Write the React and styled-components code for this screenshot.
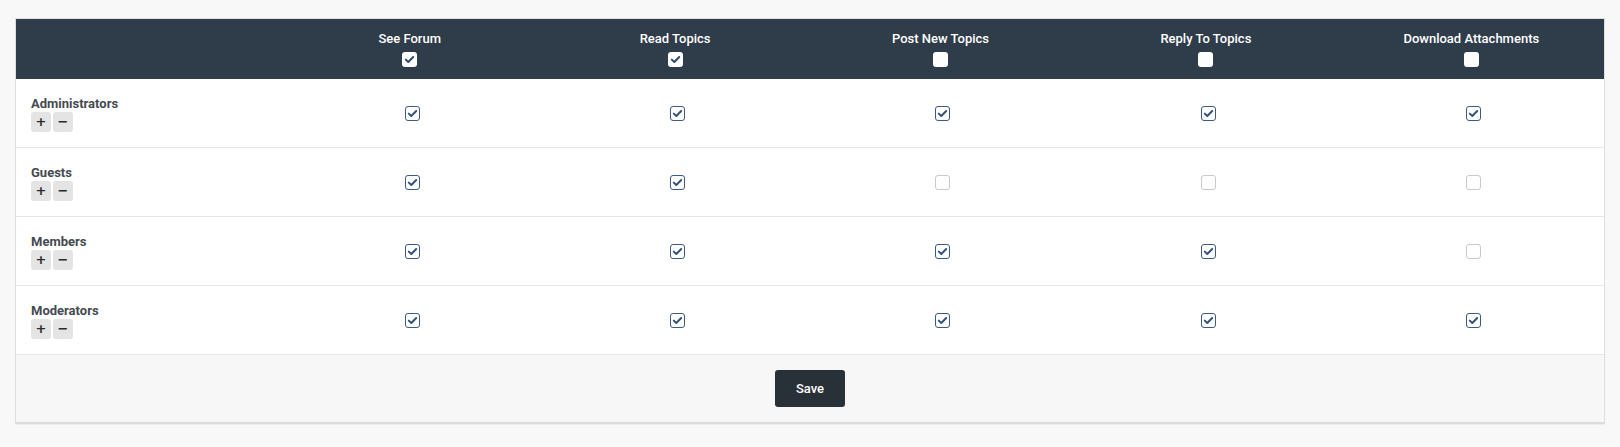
import styled, { createGlobalStyle } from 'styled-components';

const GlobalStyle = createGlobalStyle`
  html, body {
    margin: 0;
    padding: 0;
    background: #f8f8f8;
    font-family: Roboto, "Liberation Sans", Arial, sans-serif;
  }
`;

const Page = styled.div`
  padding: 18px 15px 20px;
`;

const Card = styled.div`
  background: #ffffff;
  border: 1px solid #dedede;
  border-bottom: 2px solid #dcdcdc;
  box-shadow: 0 1px 1px rgba(0, 0, 0, 0.04);
`;

const Grid = styled.div`
  display: grid;
  grid-template-columns: 261px repeat(5, 1fr);
`;

const HeadRow = styled(Grid)`
  background: #2f3c4a;
  height: 60px;
`;

const HeadCell = styled.div`
  display: flex;
  flex-direction: column;
  align-items: center;
  padding-top: 12px;
  gap: 6px;
  color: #ffffff;
  font-size: 13px;
  font-weight: 500;
  line-height: 15px;
`;

const Row = styled(Grid)`
  height: 68px;
  border-bottom: 1px solid #e6e6e6;
  align-items: center;
`;

const GroupCell = styled.div`
  padding-left: 15px;
  display: flex;
  flex-direction: column;
  gap: 0;
  margin-top: 2px;
`;

const GroupName = styled.div`
  font-size: 13px;
  font-weight: 700;
  color: #444a50;
  line-height: 16px;
`;

const Buttons = styled.div`
  display: flex;
  gap: 2px;
`;

const SmallBtn = styled.button`
  width: 20px;
  height: 20px;
  padding: 0;
  border: none;
  border-radius: 3px;
  background: #e4e4e4;
  color: #2a2a2a;
  font-family: "DejaVu Sans", sans-serif;
  font-size: 13px;
  font-weight: 700;
  line-height: 20px;
  display: flex;
  align-items: center;
  justify-content: center;
`;

const CheckCell = styled.div`
  display: flex;
  justify-content: center;
  align-items: center;
  padding-left: ${p => (p.$shift ? '5px' : '0')};
`;

const Box = styled.span`
  box-sizing: border-box;
  width: 15px;
  height: 15px;
  border-radius: 3px;
  display: inline-flex;
  align-items: center;
  justify-content: center;
  background: #ffffff;
  border: ${p =>
    p.$head ? 'none' : p.$checked ? '1.5px solid #3d5a82' : '1px solid #c9c9c9'};
`;

const Footer = styled.div`
  background: #f7f7f7;
  height: 67px;
  display: flex;
  align-items: center;
  justify-content: center;
`;

const SaveButton = styled.button`
  width: 70px;
  height: 37px;
  background: #283038;
  color: #ffffff;
  border: none;
  border-radius: 3px;
  font-family: Roboto, "Liberation Sans", Arial, sans-serif;
  font-size: 13px;
  font-weight: 500;
`;

const Check = ({ checked, head }) => (
  <Box $checked={checked} $head={head}>
    {checked && (
      <svg width="11" height="11" viewBox="0 0 11 11">
        <path
          d="M1.8 5.6 L4.3 8 L9.2 3"
          fill="none"
          stroke={head ? '#2f4a6e' : '#34527c'}
          strokeWidth="2"
          strokeLinecap="round"
          strokeLinejoin="round"
        />
      </svg>
    )}
  </Box>
);

const columns = [
  { label: 'See Forum', all: true },
  { label: 'Read Topics', all: true },
  { label: 'Post New Topics', all: false },
  { label: 'Reply To Topics', all: false },
  { label: 'Download Attachments', all: false },
];

const groups = [
  { name: 'Administrators', perms: [true, true, true, true, true] },
  { name: 'Guests', perms: [true, true, false, false, false] },
  { name: 'Members', perms: [true, true, true, true, false] },
  { name: 'Moderators', perms: [true, true, true, true, true] },
];

export default function App() {
  return (
    <>
      <GlobalStyle />
      <Page>
        <Card>
          <HeadRow>
            <div />
            {columns.map(c => (
              <HeadCell key={c.label}>
                <span>{c.label}</span>
                <Check checked={c.all} head />
              </HeadCell>
            ))}
          </HeadRow>
          {groups.map(g => (
            <Row key={g.name}>
              <GroupCell>
                <GroupName>{g.name}</GroupName>
                <Buttons>
                  <SmallBtn>+</SmallBtn>
                  <SmallBtn>−</SmallBtn>
                </Buttons>
              </GroupCell>
              {g.perms.map((p, i) => (
                <CheckCell key={i} $shift>
                  <Check checked={p} />
                </CheckCell>
              ))}
            </Row>
          ))}
          <Footer>
            <SaveButton>Save</SaveButton>
          </Footer>
        </Card>
      </Page>
    </>
  );
}
